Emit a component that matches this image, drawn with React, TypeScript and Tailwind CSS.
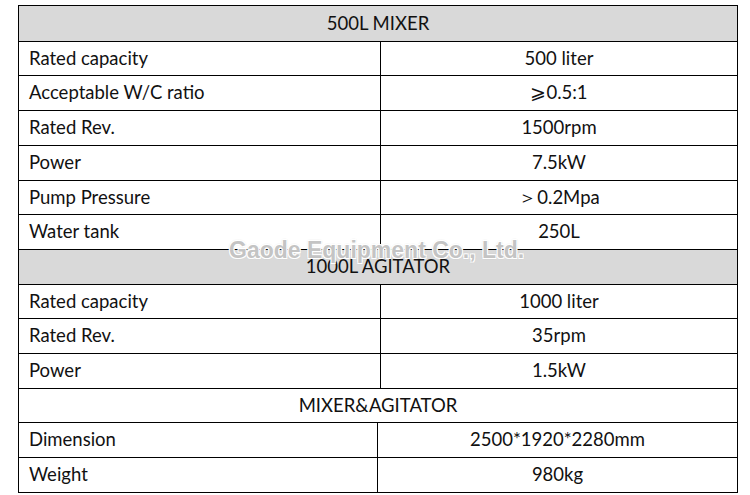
import React from 'react';

type Row =
  | { kind: 'head'; title: string; h: string; shade?: boolean }
  | { kind: 'item'; label: string; value: string; h: string; wide?: boolean };

const rows: Row[] = [
  { kind: 'head', title: '500L MIXER', h: 'h-[36px]', shade: true },
  { kind: 'item', label: 'Rated capacity', value: '500 liter', h: 'h-[34px]', wide: true },
  { kind: 'item', label: 'Acceptable W/C ratio', value: '⩾0.5:1', h: 'h-[35px]', wide: true },
  { kind: 'item', label: 'Rated Rev.', value: '1500rpm', h: 'h-[35px]', wide: true },
  { kind: 'item', label: 'Power', value: '7.5kW', h: 'h-[35px]', wide: true },
  { kind: 'item', label: 'Pump Pressure', value: '＞0.2Mpa', h: 'h-[34px]', wide: true },
  { kind: 'item', label: 'Water tank', value: '250L', h: 'h-[35px]', wide: true },
  { kind: 'head', title: '1000L AGITATOR', h: 'h-[35px]', shade: true },
  { kind: 'item', label: 'Rated capacity', value: '1000 liter', h: 'h-[34px]', wide: true },
  { kind: 'item', label: 'Rated Rev.', value: '35rpm', h: 'h-[35px]', wide: true },
  { kind: 'item', label: 'Power', value: '1.5kW', h: 'h-[35px]', wide: true },
  { kind: 'head', title: 'MIXER&AGITATOR', h: 'h-[34px]' },
  { kind: 'item', label: 'Dimension', value: '2500*1920*2280mm', h: 'h-[35px]' },
  { kind: 'item', label: 'Weight', value: '980kg', h: 'h-[34px]' },
];

export default function App() {
  return (
    <div className="relative w-[750px] h-[495px] bg-white text-[#111] overflow-hidden font-['Lato','Open_Sans',sans-serif] text-[18.5px]">
      <div className="ml-[18px] mt-[5px] w-[720px] border border-black">
        {rows.map((r, i) =>
          r.kind === 'head' ? (
            <div
              key={i}
              className={`${r.h} flex items-center justify-center border-b border-black ${
                r.shade ? 'bg-[#d9d9d9]' : 'bg-white'
              }`}
            >
              {r.title}
            </div>
          ) : (
            <div key={i} className={`${r.h} flex border-b border-black last:border-b-0`}>
              <div
                className={`${r.wide ? 'w-[362px]' : 'w-[359px]'} shrink-0 flex items-center pl-[10px] border-r border-black`}
              >
                {r.label}
              </div>
              <div className="flex-1 flex items-center justify-center">{r.value}</div>
            </div>
          )
        )}
      </div>

      {/* watermark */}
      <div className="absolute left-[229px] top-[233px] text-[23px] font-bold text-[#c4c4c4] whitespace-nowrap pointer-events-none font-['Liberation_Sans',Arial,sans-serif] [text-shadow:-1px_-1px_0_#fff,1px_-1px_0_#fff,-1px_1px_0_#fff,1px_1px_0_#fff,0_0_2px_#8a8a8a]">
        Gaode Equipment Co., Ltd.
      </div>
    </div>
  );
}
